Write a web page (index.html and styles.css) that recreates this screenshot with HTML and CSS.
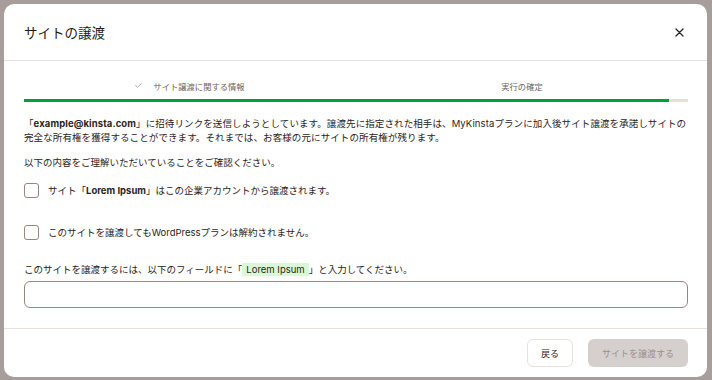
FILE: index.html
```html
<!DOCTYPE html>
<html lang="ja">
<head>
    <meta charset="UTF-8">
    <title>サイトの譲渡</title>
    <link rel="stylesheet" href="styles.css">
</head>
<body>
    <div class="modal">
        <div class="modal-header">
            <h1 class="modal-title">サイトの譲渡</h1>
            <button class="close-btn" aria-label="閉じる">
                <svg width="9" height="9" viewBox="0 0 9 9" fill="none" stroke="currentColor" stroke-width="1.3" stroke-linecap="round">
                    <path d="M1 1L8 8M8 1L1 8"></path>
                </svg>
            </button>
        </div>

        <div class="modal-body">
            <div class="steps">
                <div class="step done">
                    <svg class="step-check" width="7" height="5" viewBox="0 0 7 5" fill="none" stroke="currentColor" stroke-width="0.9" stroke-linecap="round" stroke-linejoin="round">
                        <path d="M0.6 2.4L2.5 4.2L6.4 0.6"></path>
                    </svg>
                    <span>サイト譲渡に関する情報</span>
                </div>
                <div class="step">
                    <span>実行の確定</span>
                </div>
            </div>
            <div class="progress">
                <div class="progress-fill" style="width: 97.1%"></div>
            </div>

            <p class="intro">「<strong>example@kinsta.com</strong>」に招待リンクを送信しようとしています。譲渡先に指定された相手は、MyKinstaプランに加入後サイト譲渡を承諾しサイトの完全な所有権を獲得することができます。それまでは、お客様の元にサイトの所有権が残ります。</p>

            <p class="confirm-text">以下の内容をご理解いただいていることをご確認ください。</p>

            <label class="check-row">
                <span class="checkbox"></span>
                <span>サイト「<strong>Lorem Ipsum</strong>」はこの企業アカウントから譲渡されます。</span>
            </label>
            <label class="check-row">
                <span class="checkbox"></span>
                <span>このサイトを譲渡してもWordPressプランは解約されません。</span>
            </label>

            <p class="field-label">このサイトを譲渡するには、以下のフィールドに「<span class="highlight">Lorem Ipsum</span>」と入力してください。</p>
            <input class="text-input" type="text">
        </div>

        <div class="modal-footer">
            <button class="btn btn-secondary">戻る</button>
            <button class="btn btn-primary" disabled>サイトを譲渡する</button>
        </div>
    </div>
</body>
</html>
```

FILE: styles.css
```css
:root {
    --color-overlay: #a79e9c;
    --color-bg: #ffffff;
    --color-border: #ebe1da;
    --color-text: #2b2322;
    --color-text-muted: #6f6461;
    --color-green: #0a9d37;
    --color-track: #e8dfd8;
    --color-field: #9c857e;
    --color-highlight: #d9f9d6;
    --color-disabled-bg: #d5d0ce;
    --color-disabled-text: #9b8e8b;
    --font-main: "Inter", "Noto Sans CJK JP", "Noto Sans", sans-serif;
}

* {
    margin: 0;
    padding: 0;
    box-sizing: border-box;
}

body {
    font-family: var(--font-main);
    background-color: var(--color-overlay);
    color: var(--color-text);
    padding: 4px 5px 3px 4px;
    height: 380px;
    overflow: hidden;
}

.modal {
    background-color: var(--color-bg);
    border-radius: 10px;
    height: 373px;
    display: flex;
    flex-direction: column;
}

.modal-header {
    height: 57px;
    padding: 0 20px;
    display: flex;
    align-items: center;
    justify-content: space-between;
    border-bottom: 1px solid var(--color-border);
}

.modal-title {
    font-size: 13.5px;
    font-weight: 400;
    color: #1f1817;
}

.close-btn {
    background: none;
    border: none;
    color: #2b2322;
    display: flex;
    margin-right: 3px;
    cursor: pointer;
}

.modal-body {
    padding: 20px 19px 20px 20px;
    border-bottom: 1px solid var(--color-border);
    font-size: 9.5px;
}

.steps {
    display: flex;
    height: 12px;
}

.step {
    flex: 1;
    display: flex;
    align-items: center;
    justify-content: center;
    gap: 11px;
    font-size: 8.3px;
    line-height: 12px;
    color: var(--color-text-muted);
}

.step-check {
    color: #a39895;
    margin-top: -3px;
}

.progress {
    margin-top: 6px;
    height: 3px;
    background-color: var(--color-track);
}

.progress-fill {
    height: 100%;
    background-color: var(--color-green);
}

.intro {
    margin-top: 15px;
    line-height: 14px;
    letter-spacing: 0.1px;
}

.intro strong,
.check-row strong {
    font-weight: 700;
}

.confirm-text {
    margin-top: 11px;
    line-height: 14px;
}

.check-row {
    display: flex;
    align-items: center;
    gap: 9px;
    line-height: 15px;
    margin-top: 13px;
}

.check-row + .check-row {
    margin-top: 27px;
}

.checkbox {
    width: 15px;
    height: 15px;
    border: 1px solid var(--color-field);
    border-radius: 3px;
    flex-shrink: 0;
}

.field-label {
    margin-top: 23px;
    line-height: 14px;
}

.highlight {
    background-color: var(--color-highlight);
    padding: 1px 4px;
}

.text-input {
    display: block;
    width: 100%;
    height: 27px;
    margin-top: 4px;
    border: 1px solid var(--color-field);
    border-radius: 6px;
    background: var(--color-bg);
}

.modal-footer {
    display: flex;
    justify-content: flex-end;
    gap: 15px;
    padding: 10px 19px 0 20px;
}

.btn {
    height: 28px;
    padding: 0 13px;
    border-radius: 6px;
    font-family: var(--font-main);
    font-size: 9px;
    white-space: nowrap;
    cursor: pointer;
}

.btn-secondary {
    background: var(--color-bg);
    border: 1px solid var(--color-border);
    color: var(--color-text);
    width: 46px;
}

.btn-primary {
    background: var(--color-disabled-bg);
    border: none;
    color: var(--color-disabled-text);
    width: 100px;
    padding: 0 8px;
}
```
